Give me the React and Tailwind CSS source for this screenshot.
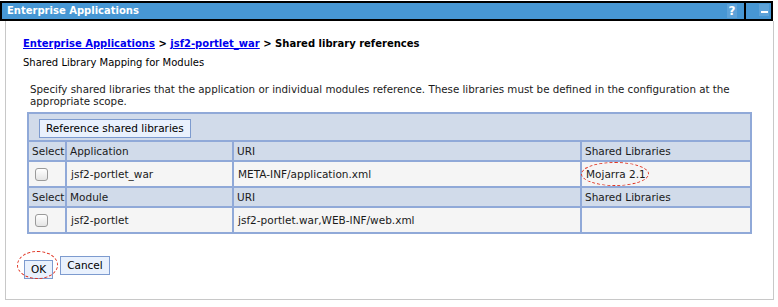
import React from "react";

const font = { fontFamily: '"DejaVu Sans", Verdana, sans-serif' };

function Btn({ children, className = "" }) {
  return (
    <button
      className={`border border-[#7d9bcf] bg-[#e9f1fd] text-[10.5px] text-black px-[6px] h-[19px] leading-[17px] ${className}`}
    >
      {children}
    </button>
  );
}

function Check() {
  return <span className="block w-[13px] h-[13px] rounded-[3px] border border-[#9a9a9a] bg-gradient-to-b from-white to-[#e4e4e4]" />;
}

function HeaderRow({ cols }) {
  return (
    <tr className="bg-[#d1dbea] h-[20px]">
      {cols.map((c, i) => (
        <td key={i} className="border-2 border-[#90a9d8] px-[3px] py-0 text-[10.5px] text-[#1a1a1a] leading-none whitespace-nowrap">
          {c}
        </td>
      ))}
    </tr>
  );
}

function DataRow({ name, uri, lib }) {
  return (
    <tr className="bg-[#f5f5f5] h-[26px]">
      <td className="border-2 border-[#90a9d8] pl-[6px] py-0">
        <Check />
      </td>
      <td className="border-2 border-[#90a9d8] px-[4px] py-0 text-[10.5px] text-[#1a1a1a] leading-none">{name}</td>
      <td className="border-2 border-[#90a9d8] px-[4px] py-0 text-[10.5px] text-[#1a1a1a] leading-none">{uri}</td>
      <td className="border-2 border-[#90a9d8] px-[4px] py-0 text-[10.5px] text-[#1a1a1a] leading-none">
        {lib && (
          <span className="relative inline-block">
            {lib}
            <span className="absolute left-[-5px] top-[-7px] w-[68px] h-[24px] rounded-[50%] border border-dashed border-[#e0301e]" />
          </span>
        )}
      </td>
    </tr>
  );
}

export default function App() {
  return (
    <div className="w-[778px] h-[307px] bg-white relative" style={font}>
      {/* Title bar */}
      <div className="absolute left-0 top-[1px] w-[773px] h-[20px] bg-[#4797d4] border-2 border-black flex items-center">
        <span className="pl-[5px] text-[10px] font-bold text-white leading-none">Enterprise Applications</span>
        <div className="ml-auto flex h-full">
          <div className="w-[10px] h-[14px] mt-[1px] mr-[7px] bg-[#5ea3d9] text-white text-[12px] font-bold leading-[14px] text-center">?</div>
          <div className="w-[2px] h-full bg-black" />
          <div className="w-[25px] flex justify-end items-end pb-[3px] pr-[2px]">
            <div className="w-[10px] h-[12px] bg-[#5ea3d9] flex items-end justify-center pb-[3px]">
              <div className="w-[7px] h-[2px] bg-white" />
            </div>
          </div>
        </div>
      </div>

      {/* Panel */}
      <div className="absolute left-[5px] top-[21px] w-[769px] h-[279px] border-x border-b border-[#c8c8c8] pl-[17px] pt-[15px]">
        <div className="text-[10px] font-bold text-black leading-[16px]">
          <a className="text-[#0000ee] underline">Enterprise Applications</a>
          {" > "}
          <a className="text-[#0000ee] underline">jsf2-portlet_war</a>
          {" > Shared library references"}
        </div>
        <div className="mt-[4px] text-[10px] text-black leading-[14px]">Shared Library Mapping for Modules</div>

        <div className="mt-[13px] ml-[7px] w-[700px] text-[10.3px] text-[#1a1a1a] leading-[12px]">
          Specify shared libraries that the application or individual modules reference. These libraries must be defined in the configuration at the appropriate scope.
        </div>

        <table className="mt-[5px] ml-[4px] w-[725px] border-collapse table-fixed">
          <colgroup>
            <col className="w-[38px]" />
            <col className="w-[167px]" />
            <col className="w-[348px]" />
            <col />
          </colgroup>
          <tbody>
            <tr className="bg-[#d1dbea] h-[28px]">
              <td colSpan={4} className="border-2 border-[#90a9d8] pl-[10px] py-0">
                <Btn>Reference shared libraries</Btn>
              </td>
            </tr>
            <HeaderRow cols={["Select", "Application", "URI", "Shared Libraries"]} />
            <DataRow name="jsf2-portlet_war" uri="META-INF/application.xml" lib="Mojarra 2.1" />
            <HeaderRow cols={["Select", "Module", "URI", "Shared Libraries"]} />
            <DataRow name="jsf2-portlet" uri="jsf2-portlet.war,WEB-INF/web.xml" />
          </tbody>
        </table>

        <div className="mt-[22px] flex gap-[7px] pl-[1px]">
          <span className="relative inline-block">
            <Btn className="px-[6px]">OK</Btn>
            <span className="absolute left-[-7px] top-[-5px] w-[41px] h-[28px] rounded-[50%] border border-dashed border-[#e0301e]" />
          </span>
          <Btn>Cancel</Btn>
        </div>
      </div>
    </div>
  );
}
